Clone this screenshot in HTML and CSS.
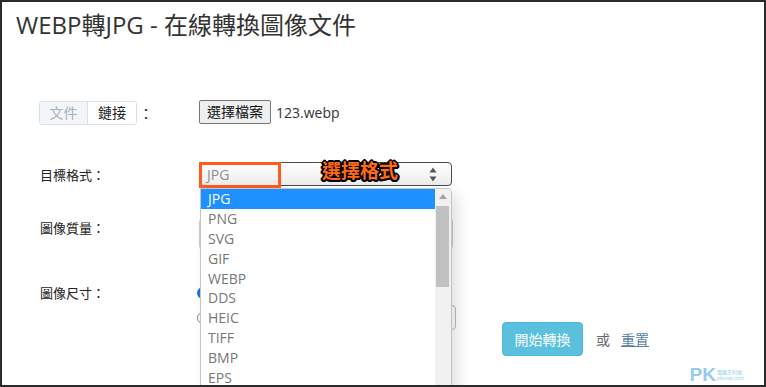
FILE: index.html
```html
<!DOCTYPE html>
<html lang="zh-Hant">
<head>
<meta charset="utf-8">
<title>WEBP轉JPG</title>
<link rel="stylesheet" href="styles.css">
</head>
<body>
<div class="frame">
  <h1 class="title">WEBP轉JPG - 在線轉換圖像文件</h1>
  <div class="form">
    <div class="row r1">
      <div class="label">
        <span class="tabs"><span class="tab off">文件</span><span class="tab on">鏈接</span></span><span class="colon">：</span>
      </div>
      <div class="ctrl">
        <span class="filebtn">選擇檔案</span><span class="fname">123.webp</span>
      </div>
    </div>

    <div class="row r2">
      <div class="label">目標格式：</div>
      <div class="ctrl">
        <div class="select">
          <span class="sel-text">JPG</span>
          <svg class="sel-arrows" width="8" height="15" viewBox="0 0 8 15"><path d="M4 0.5 L7.5 5.5 H0.5 Z M4 14.5 L7.5 9.5 H0.5 Z" fill="#555"/></svg>
          <span class="hl"></span>
          <span class="note">選擇格式</span>
          <div class="dropdown">
            <ul class="opts">
              <li class="opt active">JPG</li>
              <li class="opt">PNG</li>
              <li class="opt">SVG</li>
              <li class="opt">GIF</li>
              <li class="opt">WEBP</li>
              <li class="opt">DDS</li>
              <li class="opt">HEIC</li>
              <li class="opt">TIFF</li>
              <li class="opt">BMP</li>
              <li class="opt">EPS</li>
            </ul>
            <div class="scroll">
              <svg class="sc-up" width="8" height="5" viewBox="0 0 8 5"><path d="M4 0 L8 5 H0 Z" fill="#a3a3a3"/></svg>
              <span class="thumb"></span>
            </div>
          </div>
        </div>
      </div>
    </div>

    <div class="row r3">
      <div class="label">圖像質量：</div>
      <div class="ctrl">
        <div class="quality"></div>
      </div>
    </div>

    <div class="row r4">
      <div class="label">圖像尺寸：</div>
      <div class="ctrl sizes">
        <div class="sline"><span class="radio checked"></span></div>
        <div class="sline"><span class="radio"></span><span class="sizebox"></span></div>
      </div>
    </div>

    <div class="actions">
      <span class="gobtn">開始轉換</span>
      <span class="or">或</span>
      <span class="reset">重置</span>
    </div>
  </div>
  <div class="mark"><span class="pk">PK</span><span class="tiny">電腦王阿達<br>pkstep.com</span></div>
</div>
</body>
</html>
```

FILE: styles.css
```css
* { box-sizing: border-box; }
html, body { margin: 0; padding: 0; background: #fff; }
body {
  font-family: "Open Sans", "Noto Sans CJK TC", sans-serif;
  color: #333;
}
.frame {
  position: relative;
  width: 766px;
  height: 387px;
  border: 2px solid #2a2a2a;
  overflow: hidden;
  background: #fff;
}
.title {
  margin: 0;
  padding: 7px 0 0 14px;
  font-size: 24px;
  line-height: 32px;
  font-weight: 400;
  color: #333;
}
.form {
  margin-top: 60px;
  padding-left: 38px;
}
.row {
  display: flex;
}
.label {
  width: 159px;
  flex: none;
  font-size: 13px;
  color: #222;
  display: flex;
  align-items: center;
}
.ctrl {
  display: flex;
  align-items: center;
}
.r1, .r2 { height: 24px; align-items: center; }
.r1 .label, .r2 .label { height: 24px; }
.r2 { margin-top: 37px; }
.r3 { margin-top: 32px; height: 32px; align-items: flex-start; }
.r3 .label { line-height: 20px; }
.r4 { margin-top: 31px; height: 49px; align-items: flex-start; }
.r4 .label { line-height: 24px; }

.tabs {
  display: inline-flex;
  margin-left: -1px;
  border: 1px solid #dcdfe6;
  border-radius: 3px;
  height: 24px;
  overflow: hidden;
}
.tab {
  width: 48px;
  font-size: 14px;
  line-height: 22px;
  text-align: center;
}
.tab.off { background: #f3f6f9; color: #a7b0bc; border-right: 1px solid #dcdfe6; }
.tab.on { background: #fff; color: #222; }
.colon { font-size: 14px; margin-left: 2px; color: #222; }

.filebtn {
  display: inline-block;
  height: 24px;
  line-height: 21px;
  padding: 0 7px;
  font-size: 14px;
  color: #111;
  background: #efefef;
  border: 1px solid #767676;
  border-radius: 2px;
  margin-top: -2px;
}
.fname { font-size: 14px; margin-left: 5px; color: #333; margin-top: -2px; }

.select {
  position: relative;
  width: 253px;
  height: 24px;
  border: 1px solid #4a4a4a;
  border-radius: 4px;
  background: linear-gradient(#ffffff, #ececec);
  display: flex;
  align-items: center;
  justify-content: space-between;
  padding: 0 14px 0 7px;
}
.sel-text { font-size: 14px; color: #8e8e8e; }
.hl {
  position: absolute;
  left: -1px;
  top: -1px;
  width: 82px;
  height: 26px;
  border: 3px solid #ff5a1f;
}
.note {
  position: absolute;
  left: 122px;
  top: -4px;
  font-size: 19px;
  font-weight: 700;
  line-height: 24px;
  color: #ff6a13;
  text-shadow: 1px 0 0 #000, -1px 0 0 #000, 0 1px 0 #000, 0 -1px 0 #000,
    1px 1px 0 #000, -1px -1px 0 #000, 1px -1px 0 #000, -1px 1px 0 #000,
    2px 0 0 #000, -2px 0 0 #000, 0 2px 0 #000, 0 -2px 0 #000,
    2px 1px 0 #000, -2px 1px 0 #000, 1px 2px 0 #000, -1px 2px 0 #000;
}
.dropdown {
  position: absolute;
  left: 0;
  top: 25px;
  width: 252px;
  height: 205px;
  background: #fff;
  border: 1px solid #c4c4c4;
  border-radius: 0 4px 0 0;
  box-shadow: 6px 6px 14px rgba(0, 0, 0, 0.12);
  display: flex;
  z-index: 5;
}
.opts {
  list-style: none;
  margin: 0;
  padding: 0;
  flex: 1;
}
.opt {
  height: 19.9px;
  line-height: 20px;
  padding-left: 7px;
  font-size: 14px;
  color: #777;
}
.opt.active { background: #1e90ff; color: #fff; }
.scroll {
  position: relative;
  width: 16px;
  background: #f1f1f1;
  border-top-right-radius: 4px;
}
.sc-up { position: absolute; left: 4px; top: 5px; }
.thumb {
  position: absolute;
  left: 1px;
  right: 2px;
  top: 17px;
  height: 81px;
  background: #c1c1c1;
}

.quality {
  width: 254px;
  height: 32px;
  border: 1px solid #ccc;
  border-radius: 4px;
}
.sizes {
  flex-direction: column;
  align-items: flex-start;
  margin-left: -2px;
}
.sline {
  display: flex;
  align-items: center;
  height: 24px;
}
.sline + .sline { height: 25px; }
.radio {
  width: 12px;
  height: 12px;
  border-radius: 50%;
  border: 1px solid #8a8a8a;
  background: #fff;
}
.radio.checked { border: 4px solid #1a73e8; }
.sizebox {
  margin-left: 187px;
  width: 60px;
  height: 25px;
  border: 1px solid #bbb;
  border-radius: 4px;
}

.actions {
  display: flex;
  align-items: center;
  margin-top: -8px;
  padding-left: 462px;
  height: 34px;
}
.gobtn {
  display: inline-flex;
  align-items: center;
  justify-content: center;
  width: 81px;
  height: 34px;
  background: #5bc0de;
  border: 1px solid #46b8da;
  border-radius: 4px;
  color: #fff;
  font-size: 14px;
}
.or { margin-left: 13px; font-size: 14px; color: #666; }
.reset {
  margin-left: 11px;
  font-size: 14px;
  color: #5b7fa6;
  text-decoration: underline;
}

.mark {
  position: absolute;
  right: 20px;
  bottom: 1px;
  display: flex;
  align-items: flex-end;
  opacity: 0.75;
}
.pk {
  font-family: "Liberation Sans", sans-serif;
  font-weight: 700;
  font-size: 19px;
  line-height: 19px;
  color: #6fbde8;
}
.tiny {
  font-size: 5px;
  line-height: 6px;
  color: #6fbde8;
  margin-left: 1px;
  margin-bottom: 3px;
}
```
